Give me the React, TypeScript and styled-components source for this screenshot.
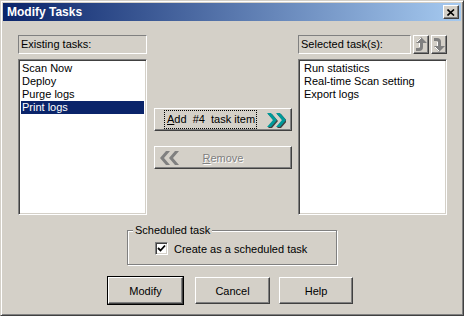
import styled, { createGlobalStyle } from 'styled-components';

const Global = createGlobalStyle`
  html, body { margin: 0; padding: 0; background: #d4d0c8; }
  body { font-family: "Liberation Sans", Arial, sans-serif; font-size: 11px; color: #000; }
`;

const Dialog = styled.div`
  width: 464px;
  height: 316px;
  box-sizing: border-box;
  background: #d4d0c8;
  border: 1px solid;
  border-color: #d4d0c8 #404040 #404040 #d4d0c8;
  box-shadow: inset 1px 1px 0 #fff, inset -1px -1px 0 #808080;
  padding: 2px;
  display: flex;
  flex-direction: column;
`;

const TitleBar = styled.div`
  height: 18px;
  display: flex;
  align-items: center;
  justify-content: space-between;
  padding: 0 2px 0 4px;
  background: linear-gradient(to right, #0a246a, #a6caf0);
`;

const TitleText = styled.span`
  color: #fff;
  font-weight: bold;
  font-size: 12px;
`;

const raised = `
  background: #d4d0c8;
  border: 1px solid;
  border-color: #fff #404040 #404040 #fff;
  box-shadow: inset -1px -1px 0 #808080;
  box-sizing: border-box;
`;

const sunken = `
  background: #fff;
  border: 1px solid;
  border-color: #808080 #fff #fff #808080;
  box-shadow: inset 1px 1px 0 #404040, inset -1px -1px 0 #d4d0c8;
  box-sizing: border-box;
`;

const CloseBox = styled.div`
  ${raised}
  width: 16px;
  height: 14px;
  display: flex;
  align-items: center;
  justify-content: center;
`;

const Body = styled.div`
  flex: 1;
  display: flex;
  flex-direction: column;
  padding: 14px 0 0 15px;
`;

const Top = styled.div`
  display: flex;
  height: 180px;
`;

const Column = styled.div<{ w: number; ml?: number }>`
  width: ${({ w }) => w}px;
  margin-left: ${({ ml }) => ml || 0}px;
  display: flex;
  flex-direction: column;
`;

const HeadRow = styled.div`
  display: flex;
  height: 19px;
  gap: 1px;
`;

const Caption = styled.div<{ w?: number }>`
  height: 19px;
  width: ${({ w }) => (w ? `${w}px` : 'auto')};
  box-sizing: border-box;
  border: 1px solid;
  border-color: #808080 #fff #fff #808080;
  padding: 2px 0 0 2px;
  white-space: nowrap;
`;

const ArrowBtn = styled.div`
  ${raised}
  width: 16px;
  height: 19px;
  display: flex;
  align-items: center;
  justify-content: center;
  margin-left: 1px;
`;

const List = styled.div`
  ${sunken}
  margin-top: 5px;
  height: 156px;
  padding: 2px;
`;

const Item = styled.div<{ selected?: boolean; pl?: number }>`
  height: 13px;
  line-height: 13px;
  padding-left: ${({ pl }) => pl ?? 1}px;
  background: ${({ selected }) => (selected ? '#0a246a' : 'transparent')};
  color: ${({ selected }) => (selected ? '#fff' : '#000')};
  white-space: nowrap;
`;

const Middle = styled.div`
  width: 138px;
  margin-left: 7px;
  padding-top: 73px;
  display: flex;
  flex-direction: column;
  gap: 15px;
`;

const MoveButton = styled.div<{ disabled?: boolean }>`
  ${raised}
  height: 23px;
  display: flex;
  align-items: center;
  justify-content: space-between;
  padding: 0 5px 0 ${({ disabled }) => (disabled ? 5 : 10)}px;
  color: ${({ disabled }) => (disabled ? '#808080' : '#000')};
  text-shadow: ${({ disabled }) => (disabled ? '1px 1px 0 #fff' : 'none')};
`;

const FocusText = styled.span`
  outline: 1px dotted #000;
  padding: 2px 1px 3px 2px;
  white-space: pre;
`;

const RemoveText = styled.span`
  flex: 1;
  text-align: center;
  padding-right: 20px;
`;

const Group = styled.div`
  position: relative;
  width: 210px;
  height: 35px;
  margin: 15px 0 0 109px;
  box-sizing: border-box;
  border: 1px solid #808080;
  box-shadow: inset 1px 1px 0 #fff, 1px 1px 0 #fff;
  display: flex;
  align-items: center;
  padding: 2px 0 0 27px;
`;

const Legend = styled.span`
  position: absolute;
  left: 5px;
  top: -7px;
  padding: 0 2px;
  background: #d4d0c8;
  line-height: 13px;
`;

const CheckRow = styled.label`
  display: flex;
  align-items: center;
  gap: 6px;
`;

const CheckBox = styled.div`
  ${sunken}
  width: 13px;
  height: 13px;
  display: flex;
  align-items: center;
  justify-content: center;
`;

const Buttons = styled.div`
  display: flex;
  margin: 12px 0 0 90px;
`;

const PushButton = styled.div<{ w: number; ml?: number; isDefault?: boolean }>`
  ${raised}
  width: ${({ w }) => w}px;
  height: 27px;
  margin-left: ${({ ml }) => ml || 0}px;
  display: flex;
  align-items: center;
  justify-content: center;
  ${({ isDefault }) => (isDefault ? `outline: 1px solid #000;` : '')}
`;

const U = styled.span`
  text-decoration: underline;
`;

const Chevrons = ({ color, shade }: { color: string; shade: string }) => (
  <svg width="20" height="16" viewBox="0 0 20 16">
    {[0, 9].map(x => (
      <g key={x}>
        <polygon points={`${x + 1},1 ${x + 5},1 ${x + 11},8 ${x + 5},15 ${x + 1},15 ${x + 7},8`} fill={shade} transform="translate(1,1)" />
        <polygon points={`${x + 1},1 ${x + 5},1 ${x + 11},8 ${x + 5},15 ${x + 1},15 ${x + 7},8`} fill={color} />
      </g>
    ))}
  </svg>
);

const BackChevrons = () => (
  <svg width="20" height="16" viewBox="0 0 20 16">
    {[0, 9].map(x => (
      <polygon key={x} points={`${x + 10},1 ${x + 6},1 ${x + 0},8 ${x + 6},15 ${x + 10},15 ${x + 4},8`} fill="#808080" />
    ))}
  </svg>
);

// grey 3d hooked arrow used on the reorder buttons
const UpArrow = ({ down }: { down?: boolean }) => (
  <svg width="12" height="15" viewBox="0 0 12 15" style={down ? { transform: 'scaleY(-1)' } : undefined}>
    <path d="M6 0 L12 6 L8 6 L8 10 Q8 14 4 14 L1 14 L1 11 L4 11 Q5 11 5 10 L5 6 L1 6 Z" fill="#808080" />
    <path d="M6 1 L2 5 M4.5 6 L4.5 10" stroke="#fff" strokeWidth="1" fill="none" />
  </svg>
);

export default function App() {
  const existing = ['Scan Now', 'Deploy', 'Purge logs', 'Print logs'];
  const selected = ['Run statistics', 'Real-time Scan setting', 'Export logs'];

  return (
    <>
      <Global />
      <Dialog>
        <TitleBar>
          <TitleText>Modify Tasks</TitleText>
          <CloseBox>
            <svg width="8" height="7" viewBox="0 0 8 7">
              <path d="M0.5 0.5 L7 6.5 M7 0.5 L0.5 6.5" stroke="#000" strokeWidth="1.6" />
            </svg>
          </CloseBox>
        </TitleBar>
        <Body>
          <Top>
            <Column w={129}>
              <Caption>Existing tasks:</Caption>
              <List>
                {existing.map(t => (
                  <Item key={t} selected={t === 'Print logs'}>{t}</Item>
                ))}
              </List>
            </Column>
            <Middle>
              <MoveButton>
                <FocusText><U>A</U>dd  #4  task item</FocusText>
                <Chevrons color="#009999" shade="#404040" />
              </MoveButton>
              <MoveButton disabled>
                <BackChevrons />
                <RemoveText><U>R</U>emove</RemoveText>
              </MoveButton>
            </Middle>
            <Column w={149} ml={6}>
              <HeadRow>
                <Caption w={115}>Selected task(s):</Caption>
                <ArrowBtn><UpArrow /></ArrowBtn>
                <ArrowBtn><UpArrow down /></ArrowBtn>
              </HeadRow>
              <List>
                {selected.map(t => (
                  <Item key={t} pl={3}>{t}</Item>
                ))}
              </List>
            </Column>
          </Top>
          <Group>
            <Legend>Scheduled task</Legend>
            <CheckRow>
              <CheckBox>
                <svg width="9" height="9" viewBox="0 0 9 9">
                  <path d="M1 4 L3.5 6.5 L8 1.5" stroke="#000" strokeWidth="1.8" fill="none" />
                </svg>
              </CheckBox>
              Create as a scheduled task
            </CheckRow>
          </Group>
          <Buttons>
            <PushButton w={75} isDefault>Modify</PushButton>
            <PushButton w={75} ml={12}>Cancel</PushButton>
            <PushButton w={74} ml={9}>Help</PushButton>
          </Buttons>
        </Body>
      </Dialog>
    </>
  );
}
